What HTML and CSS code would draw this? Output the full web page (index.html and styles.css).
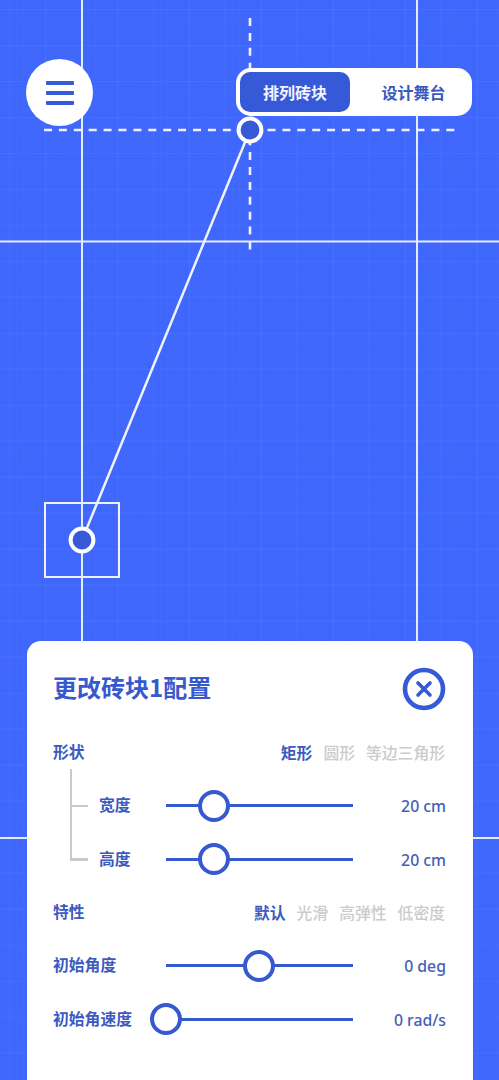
FILE: index.html
```html
<!DOCTYPE html>
<html lang="zh-CN">
<head>
<meta charset="utf-8">
<title>配置</title>
<link rel="stylesheet" href="styles.css">
</head>
<body>
<div class="stage">
  <svg class="canvas" width="499" height="1080" viewBox="0 0 499 1080">
    <g class="guide">
      <line x1="82" y1="0" x2="82" y2="1080"/>
      <line x1="417" y1="0" x2="417" y2="1080"/>
      <line x1="0" y1="241.5" x2="499" y2="241.5"/>
      <line x1="0" y1="838" x2="499" y2="838"/>
    </g>
    <g class="dash">
      <line x1="44" y1="130" x2="455" y2="130"/>
      <line x1="250" y1="18" x2="250" y2="250"/>
    </g>
    <rect class="box" x="45" y="503" width="74" height="74"/>
    <line class="link" x1="250" y1="130" x2="82" y2="540"/>
    <circle class="node" cx="250" cy="130" r="11.4"/>
    <circle class="node" cx="82" cy="540" r="11.4"/>
  </svg>

  <header class="top">
    <button class="menu" type="button" aria-label="菜单">
      <span></span><span></span><span></span>
    </button>
    <div class="tabs">
      <div class="tab tab-on">排列砖块</div>
      <div class="tab">设计舞台</div>
    </div>
  </header>

  <section class="panel">
    <div class="head">
      <h1>更改砖块1配置</h1>
      <svg class="close" width="44" height="44" viewBox="0 0 44 44">
        <circle cx="22" cy="22" r="19"/>
        <path d="M16 16 L28 28 M28 16 L16 28"/>
      </svg>
    </div>

    <div class="row">
      <div class="label">形状</div>
      <div class="opts opts-a"><span class="on">矩形</span><span>圆形</span><span>等边三角形</span></div>
    </div>

    <div class="tree">
      <div class="row sub">
        <div class="label label-sub">宽度</div>
        <div class="slider"><i class="thumb" style="left:48px"></i></div>
        <div class="value">20 cm</div>
      </div>
      <div class="row sub">
        <div class="label label-sub">高度</div>
        <div class="slider"><i class="thumb" style="left:48px"></i></div>
        <div class="value">20 cm</div>
      </div>
    </div>

    <div class="row">
      <div class="label">特性</div>
      <div class="opts opts-b"><span class="on">默认</span><span>光滑</span><span>高弹性</span><span>低密度</span></div>
    </div>

    <div class="row">
      <div class="label">初始角度</div>
      <div class="slider"><i class="thumb" style="left:93px"></i></div>
      <div class="value">0 deg</div>
    </div>
    <div class="row">
      <div class="label">初始角速度</div>
      <div class="slider"><i class="thumb" style="left:0"></i></div>
      <div class="value">0 rad/s</div>
    </div>
  </section>
</div>
</body>
</html>
```
FILE: styles.css
```css
* { box-sizing: border-box; }
html, body { margin: 0; padding: 0; }
body {
  width: 499px;
  height: 1080px;
  overflow: hidden;
  font-family: "Noto Sans CJK SC", "Noto Sans", sans-serif;
}
.stage {
  position: relative;
  width: 499px;
  height: 1080px;
  display: flex;
  flex-direction: column;
  justify-content: space-between;
  background-color: #3f67fb;
  background-image:
    linear-gradient(rgba(255,255,255,.04) 1px, transparent 1px),
    linear-gradient(90deg, rgba(255,255,255,.04) 1px, transparent 1px),
    linear-gradient(rgba(255,255,255,.012) 1px, transparent 1px),
    linear-gradient(90deg, rgba(255,255,255,.012) 1px, transparent 1px);
  background-size: 36px 36px, 36px 36px, 7.2px 7.2px, 7.2px 7.2px;
  background-position: 9px 9px;
}
.canvas { position: absolute; left: 0; top: 0; }
.guide line { stroke: #e6ecff; stroke-width: 2; }
.dash line { stroke: #edf1ff; stroke-width: 2.6; stroke-dasharray: 8 6.9; }
.box { fill: none; stroke: #f0f3ff; stroke-width: 2; }
.link { stroke: #f0f3ff; stroke-width: 2.5; }
.node { fill: #3659d8; stroke: #fff; stroke-width: 4; }

.top {
  position: relative;
  display: flex;
  justify-content: space-between;
  align-items: flex-start;
  padding: 59px 27px 0 26px;
}
.menu {
  width: 67px;
  height: 67px;
  border: 0;
  border-radius: 50%;
  background: #fff;
  padding: 0;
  display: flex;
  flex-direction: column;
  align-items: center;
  justify-content: center;
  gap: 6px;
}
.menu span {
  display: block;
  width: 28px;
  height: 4px;
  border-radius: 1px;
  background: #3659d8;
}
.tabs {
  margin-top: 9px;
  width: 236px;
  height: 48px;
  padding: 4px;
  display: flex;
  background: #fff;
  border-radius: 15px;
}
.tab {
  height: 40px;
  flex: 1;
  display: flex;
  align-items: center;
  justify-content: center;
  font-size: 16px;
  font-weight: 700;
  color: #3a58bd;
  padding-left: 9px;
  padding-bottom: 1px;
}
.tab-on {
  flex: 0 0 110px;
  padding-left: 0;
  background: #3659d8;
  color: #f2f4ff;
  border-radius: 10px;
}

.panel {
  position: relative;
  width: 446px;
  height: 439px;
  margin-left: 26.5px;
  padding: 0 27.5px 0 26.5px;
  background: #fff;
  border-radius: 14px 14px 0 0;
}
.head {
  height: 85px;
  padding-top: 26px;
  display: flex;
  justify-content: space-between;
  align-items: flex-start;
}
.head h1 {
  margin: 0;
  font-size: 24px;
  line-height: 40px;
  font-weight: 700;
  color: #3659d0;
}
.close { margin: 0 -1px 0 0; }
.close circle { fill: none; stroke: #3659d8; stroke-width: 4.6; }
.close path { fill: none; stroke: #3659d8; stroke-width: 3.6; stroke-linecap: round; }

.row {
  height: 53.3px;
  display: flex;
  align-items: center;
}
.label {
  flex: 0 0 113px;
  font-size: 15.8px;
  font-weight: 700;
  color: #3c5ac0;
  padding-bottom: 2px;
}
.label-sub { flex-basis: 67px; }
.tree {
  position: relative;
  padding-left: 46px;
}
.tree::before {
  content: "";
  position: absolute;
  left: 16.5px;
  top: -10px;
  width: 2.5px;
  height: 90px;
  background: #c9c9c9;
}
.sub { position: relative; }
.sub::before {
  content: "";
  position: absolute;
  left: -29.5px;
  top: 25.5px;
  width: 18px;
  height: 2.5px;
  background: #c9c9c9;
}
.slider {
  position: relative;
  flex: 0 0 187px;
  height: 3px;
  background: #3659d0;
}
.thumb {
  position: absolute;
  top: 1.5px;
  width: 32px;
  height: 32px;
  margin: -16px 0 0 -16px;
  border: 4px solid #3659d0;
  border-radius: 50%;
  background: #fff;
}
.value {
  flex: 1;
  margin-right: -1px;
  padding-top: 1px;
  text-align: right;
  font-family: "Noto Sans", sans-serif;
  font-size: 15.8px;
  font-weight: 500;
  color: #4560b8;
}
.opts {
  flex: 1;
  display: flex;
  justify-content: flex-end;
  font-size: 15.8px;
  font-weight: 500;
  color: #cbcbcb;
  padding-bottom: 1px;
}
.opts-a { gap: 11px; }
.opts-b { gap: 11px; }
.opts .on { color: #3c5ac0; font-weight: 700; }
```
